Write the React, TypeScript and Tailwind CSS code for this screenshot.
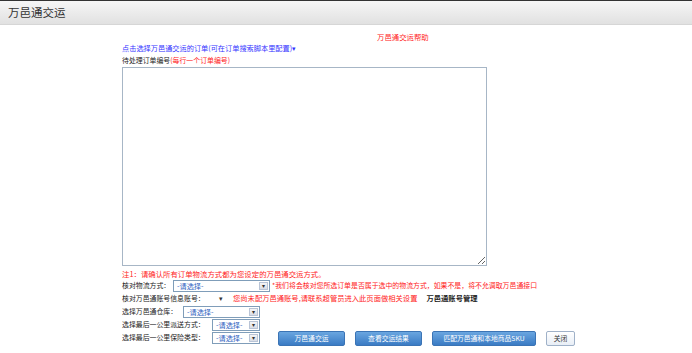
import React from 'react';

const font = { fontFamily: '"Noto Sans CJK SC", "Noto Sans", sans-serif' };

const Select: React.FC<{ w: string }> = ({ w }) => (
  <div className={`flex h-[12px] shrink-0 items-stretch border border-[#7f9db9] bg-white ${w}`}>
    <span className="flex-1 whitespace-nowrap pl-[3px] text-[7.2px] leading-[10px] text-[#2f5fc0]">-请选择-</span>
    <span className="m-[1px] flex w-[9px] items-center justify-center border border-[#b9c4d6] bg-gradient-to-b from-[#f5f5f5] to-[#d9dde6] text-[6px] leading-none text-[#333]">
      ▾
    </span>
  </div>
);

const BlueButton: React.FC<{ w: string; children: React.ReactNode }> = ({ w, children }) => (
  <button
    className={`h-[15px] whitespace-nowrap rounded-[2px] border border-[#3b74b5] bg-gradient-to-b from-[#6aa6e0] to-[#3a7bc4] text-[6.8px] leading-none text-white ${w}`}
  >
    {children}
  </button>
);

export default function App() {
  return (
    <div className="h-[353px] w-[692px] overflow-hidden bg-white text-[6.9px] leading-[11px] text-[#222]" style={font}>
      {/* header */}
      <div className="flex h-[25px] items-center border-t border-[#333] border-b border-b-[#d6d6d6] bg-gradient-to-b from-[#f6f6f6] to-[#e1e1e1] pl-[8px]">
        <span className="text-[11.5px] text-[#333]">万邑通交运</span>
      </div>

      <div className="pl-[122px] pt-[6px]">
        <div className="pl-[255px] text-[7.4px] text-[#ff2222]">万邑通交运帮助</div>
        <div className="mt-[1px] whitespace-nowrap text-[7.2px] text-[#3333ff]">点击选择万邑通交运的订单(可在订单搜索脚本里配置)▾</div>
        <div className="mt-[1px] whitespace-nowrap">
          待处理订单编号<span className="text-[#ff2222]">(每行一个订单编号)</span>
        </div>
        <textarea className="mt-[1px] block h-[199px] w-[365px] resize border border-[#a7b6c6] bg-white outline-none" />

        <div className="mt-[2px] whitespace-nowrap text-[7.4px] text-[#ff2222]">注1：请确认所有订单物流方式都为您设定的万邑通交运方式。</div>

        <div className="flex h-[13px] items-center whitespace-nowrap">
          <span className="w-[51px] shrink-0">核对物流方式：</span>
          <Select w="w-[97px]" />
          <span className="ml-[2px] text-[#ff2222]">*我们将会核对您所选订单是否属于选中的物流方式，如果不是，将不允调取万邑通接口</span>
        </div>

        <div className="flex h-[13px] items-center whitespace-nowrap">
          <span className="w-[88px] shrink-0">核对万邑通账号信息账号：</span>
          <span className="w-[22px] shrink-0 text-center text-[7px] text-[#333]">▾</span>
          <span className="ml-[1px] text-[7.3px] text-[#ff2222]">您尚未配万邑通账号,请联系超管员进入此页面做相关设置</span>
          <span className="ml-[9px] text-[7.3px] font-bold text-[#222]">万邑通账号管理</span>
        </div>

        <div className="flex items-start">
          <div className="w-[156px] shrink-0 whitespace-nowrap">
            <div className="flex h-[13px] items-center">
              <span className="w-[61px] shrink-0">选择万邑通仓库：</span>
              <Select w="w-[77px]" />
            </div>
            <div className="flex h-[13px] items-center">
              <span className="w-[90px] shrink-0">选择最后一公里派送方式：</span>
              <Select w="w-[48px]" />
            </div>
            <div className="flex h-[13px] items-center">
              <span className="w-[90px] shrink-0">选择最后一公里保险类型：</span>
              <Select w="w-[48px]" />
            </div>
          </div>
          <div className="mt-[26px] flex gap-[10px]">
            <BlueButton w="w-[67px]">万邑通交运</BlueButton>
            <BlueButton w="w-[67px]">查看交运结果</BlueButton>
            <BlueButton w="w-[104px]">匹配万邑通和本地商品SKU</BlueButton>
            <button className="h-[15px] w-[29px] rounded-[2px] border border-[#9fb1c8] bg-gradient-to-b from-white to-[#e8eef6] text-[6.8px] leading-none text-[#333]">
              关闭
            </button>
          </div>
        </div>
      </div>
    </div>
  );
}
